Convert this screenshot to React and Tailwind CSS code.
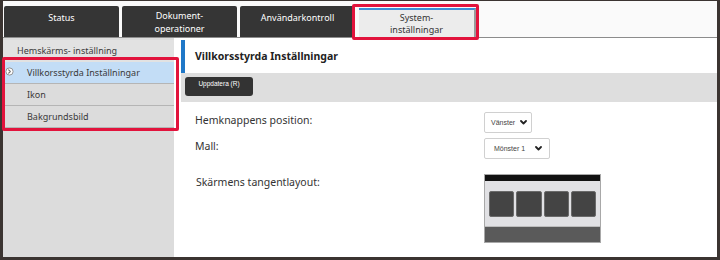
import React from "react";

function Chevron({ className = "" }) {
  return (
    <svg width="7" height="5" viewBox="0 0 7 5" className={className}>
      <path d="M1 1 L3.5 3.5 L6 1" fill="none" stroke="#222" strokeWidth="1.8" strokeLinecap="round" strokeLinejoin="round" />
    </svg>
  );
}

function Tab({ children, single }) {
  return (
    <div
      className={
        "w-[115px] h-[31px] bg-[#353535] rounded-t-[2px] flex justify-center text-center text-white text-[9px] leading-[13px] " +
        (single ? "items-start pt-[5px]" : "items-center pt-[1px]")
      }
    >
      <div>{children}</div>
    </div>
  );
}

function SideItem({ children, active }) {
  return (
    <div
      className={
        "relative h-[22px] flex items-center pl-[24px] text-[9px] text-[#3a3a3a] border-b border-[#b5b5b5] " +
        (active ? "bg-[#c3ddf6]" : "")
      }
    >
      {active && (
        <svg width="9" height="9" viewBox="0 0 9 9" className="absolute left-[2px] top-[5px]">
          <circle cx="4.5" cy="4.5" r="3.6" fill="#fff" stroke="#8a8a8a" strokeWidth="0.9" />
          <path d="M3.7 2.9 L5.3 4.5 L3.7 6.1" fill="none" stroke="#6f6f6f" strokeWidth="1.1" strokeLinecap="round" strokeLinejoin="round" />
        </svg>
      )}
      {children}
    </div>
  );
}

export default function App() {
  return (
    <div className="relative w-[720px] h-[260px] overflow-hidden font-['Noto_Sans','Open_Sans',sans-serif]">
      <div className="w-full h-full border-t border-x-[3px] border-b-[3px] border-[#3b3431] bg-white flex flex-col">
        {/* tabs */}
        <div className="h-[37px] shrink-0 bg-[#fafafa] border-b border-[#8c8c8c] flex items-end gap-[3px] pl-[1px]">
          <Tab single>Status</Tab>
          <Tab>
            Dokument-
            <br />
            operationer
          </Tab>
          <Tab single>Användarkontroll</Tab>
          <div className="ml-[1px] w-[117px] h-[29px] bg-[#ececec] border-t-2 border-[#3d8ed6] border-r-2 border-r-[#9a9a9a] flex items-center justify-center text-center text-[#333] text-[9px] leading-[12px]">
            <div>
              System-
              <br />
              inställningar
            </div>
          </div>
        </div>
        {/* body */}
        <div className="flex-1 flex min-h-0">
          <div className="w-[171px] shrink-0 bg-[#dcdcdc] pt-[2px]">
            <div className="h-[22px] flex items-center pl-[14px] text-[9px] text-[#3a3a3a] bg-[#e2e2e2]">
              Hemskärms- inställning
            </div>
            <div>
              <SideItem active>Villkorsstyrda Inställningar</SideItem>
              <SideItem>Ikon</SideItem>
              <SideItem>Bakgrundsbild</SideItem>
            </div>
          </div>
          <div className="flex-1 bg-white pl-[7px] pt-[2px] flex flex-col">
            <div className="h-[33px] flex items-center border-l-4 border-[#1f78c8] pl-[10px] pt-[1px] text-[10.5px] font-bold text-[#222]">
              Villkorsstyrda Inställningar
            </div>
            <div className="h-[29px] bg-[#dedede] pl-[4px] pt-[4px]">
              <div className="w-[68px] h-[19px] rounded-[3px] bg-[#333] text-white text-[6.5px] font-['Liberation_Sans',sans-serif] text-center pt-[3px] leading-[8px]">
                Uppdatera (R)
              </div>
            </div>
            <div className="grid grid-cols-[289px_1fr] pl-[14px] pt-[10px] text-[10.5px] text-[#333] leading-[17px]">
              <div>Hemknappens position:</div>
              <div>
                <div className="w-[48px] h-[21px] border border-[#d0d0d0] rounded-[2px] flex items-center pl-[6px] gap-[5px] text-[7px] text-[#444] font-['Liberation_Sans',sans-serif]">
                  <span>Vänster</span>
                  <Chevron />
                </div>
              </div>
              <div className="mt-[5px]">Mall:</div>
              <div className="mt-[5px]">
                <div className="w-[66px] h-[21px] border border-[#d0d0d0] rounded-[2px] flex items-center pl-[9px] gap-[10px] text-[7px] text-[#444] font-['Liberation_Sans',sans-serif]">
                  <span>Mönster 1</span>
                  <Chevron />
                </div>
              </div>
              <div className="mt-[15px] pl-[1px]">Skärmens tangentlayout:</div>
              <div className="mt-[15px]">
                <div className="w-[117px] h-[69px] border border-[#a8a8a8] flex flex-col">
                  <div className="h-[6px] bg-[#111]" />
                  <div className="flex-1 bg-[#e1e1e4] flex items-center gap-[2px] px-[4px]">
                    <div className="flex-1 h-[26px] bg-[#444] border border-[#6a6a6a] rounded-[2px]" />
                    <div className="flex-1 h-[26px] bg-[#444] border border-[#6a6a6a] rounded-[2px]" />
                    <div className="flex-1 h-[26px] bg-[#444] border border-[#6a6a6a] rounded-[2px]" />
                    <div className="flex-1 h-[26px] bg-[#444] border border-[#6a6a6a] rounded-[2px]" />
                  </div>
                  <div className="h-[16px] bg-[#5a5a5a] border-t border-[#bdbdbd]" />
                </div>
              </div>
            </div>
          </div>
        </div>
      </div>
      {/* annotation overlays */}
      <div className="absolute left-[352px] top-[4px] w-[127px] h-[36px] border-[3px] border-[#e2133c] rounded-[2px]" />
      <div className="absolute left-[2px] top-[57px] w-[177px] h-[74px] border-[3px] border-[#e2133c] rounded-[2px]" />
    </div>
  );
}
